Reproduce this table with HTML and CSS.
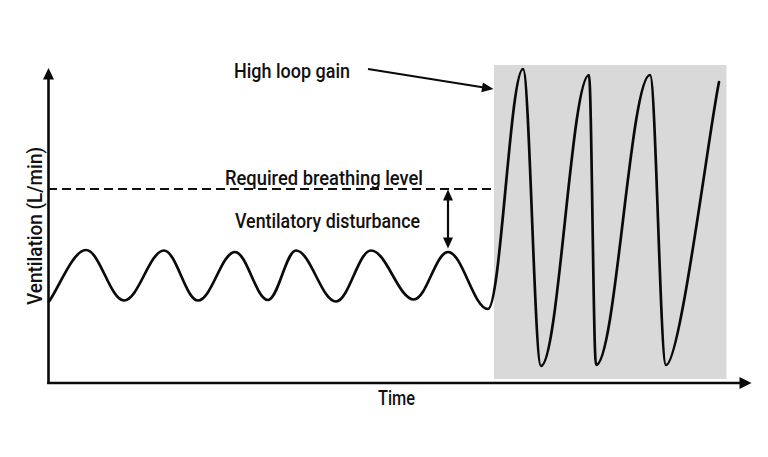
FILE: index.html
```html
<!DOCTYPE html>
<html lang="en">
<head>
<meta charset="utf-8">
<title>High loop gain</title>
<link rel="stylesheet" href="styles.css">
</head>
<body>
<figure class="figure">
<svg class="chart" width="768" height="457" viewBox="0 0 768 457" xmlns="http://www.w3.org/2000/svg">
  <rect class="zone" x="494" y="65" width="232.5" height="314"/>

  <line class="dash" x1="48" y1="189" x2="494" y2="189"/>

  <path class="wave" d="M49,301.5
    C59,287.5 73,250 86,250
    C99.7,250 110.3,300.5 124,300.5
    C138.4,300.5 149.6,250.5 164,250.5
    C176.2,250.5 185.8,300.5 198,300.5
    C211.3,300.5 221.7,252 235,252
    C246.9,252 256.1,300 268,300
    C278.1,300 285.9,250.5 296,250.5
    C310.4,250.5 321.6,301.5 336,301.5
    C348.6,301.5 358.4,250.5 371,250.5
    C386.5,250.5 398.5,299.5 414,299.5
    C426.2,299.5 435.8,252 448,252
    C462.4,252 473.6,309 488,309
    C500.6,309 510.4,69 523,69
    C529.5,69 534.5,366 541,366
    C558.3,366 571.7,75 589,75
    C591.5,75 593.5,365 596,365
    C615.4,365 630.6,75 650,75
    C655.8,75 660.2,365 666,365
    C680,365 709,130 719,82"/>

  <line class="axis" x1="48.5" y1="77" x2="48.5" y2="384"/>
  <polygon class="head" points="48.5,68 43,79.5 54,79.5"/>
  <line class="axis" x1="47.2" y1="383" x2="741" y2="383"/>
  <polygon class="head" points="751.5,383 739.5,377 739.5,389"/>

  <line class="thin" x1="448" y1="199" x2="448" y2="239"/>
  <polygon class="head" points="448,189.5 443,200.5 453,200.5"/>
  <polygon class="head" points="448,248.5 443,237.5 453,237.5"/>

  <line class="thin" x1="368" y1="69" x2="484" y2="87.5"/>
  <polygon class="head" points="493.5,89 482.9,82.4 481.3,92.2"/>

  <text class="label" x="234" y="77.5" textLength="116" lengthAdjust="spacingAndGlyphs">High loop gain</text>
  <text class="label" x="225" y="184.5" textLength="198" lengthAdjust="spacingAndGlyphs">Required breathing level</text>
  <text class="label" x="235" y="227.5" textLength="185" lengthAdjust="spacingAndGlyphs">Ventilatory disturbance</text>
  <text class="label" x="378" y="405" textLength="37" lengthAdjust="spacingAndGlyphs">Time</text>
  <text class="label" transform="translate(41.5,226) rotate(-90)" x="-79" y="0" textLength="158" lengthAdjust="spacingAndGlyphs">Ventilation (L/min)</text>
</svg>
</figure>
</body>
</html>
```

FILE: styles.css
```css
html, body {
  margin: 0;
  padding: 0;
  background: #ffffff;
}

.figure {
  margin: 0;
  width: 768px;
  height: 457px;
  display: block;
  overflow: hidden;
}

.chart {
  display: block;
}

.zone {
  fill: #d9d9d9;
}

.dash {
  stroke: #111111;
  stroke-width: 2;
  stroke-dasharray: 9 5;
  fill: none;
}

.wave {
  fill: none;
  stroke: #0a0a0a;
  stroke-width: 2.7;
  stroke-linejoin: round;
  stroke-linecap: round;
}

.axis {
  stroke: #0a0a0a;
  stroke-width: 2.6;
}

.thin {
  stroke: #0a0a0a;
  stroke-width: 2.2;
}

.head {
  fill: #0a0a0a;
}

.label {
  font-family: Roboto, "Liberation Sans", sans-serif;
  font-size: 20.5px;
  font-weight: 500;
  fill: #111111;
}
```
